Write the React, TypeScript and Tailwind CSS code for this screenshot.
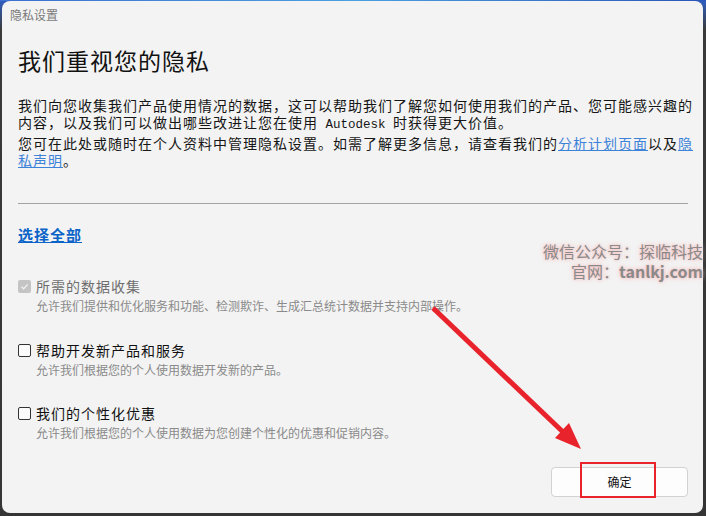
import React from "react";

const font = { fontFamily: '"Noto Sans CJK SC", "Noto Sans", sans-serif' };

function Box({ disabled }: { disabled?: boolean }) {
  if (disabled) {
    return (
      <div className="w-[13px] h-[13px] rounded-[2px] bg-[#c4c4c4] flex items-center justify-center shrink-0">
        <svg width="9" height="9" viewBox="0 0 9 9">
          <path d="M1.5 4.8 L3.6 6.8 L7.6 2.4" stroke="#f4f4f4" strokeWidth="1.2" fill="none" />
        </svg>
      </div>
    );
  }
  return <div className="w-[13px] h-[13px] rounded-[2px] border border-[#333] bg-[#fbfbfb] shrink-0" />;
}

function Item({ label, desc, disabled, mt }: { label: string; desc: string; disabled?: boolean; mt: string }) {
  return (
    <div className={mt}>
      <div className="flex items-center gap-[5px] h-[20px]">
        <Box disabled={disabled} />
        <span className={`text-[14px] tracking-[1px] leading-[20px] whitespace-nowrap ${disabled ? "text-[#6e6e6e]" : "text-[#111]"}`}>{label}</span>
      </div>
      <div className="mt-[2px] pl-[18px] text-[12px] leading-[16px] h-[16px] text-[#8a8a8a] whitespace-nowrap">{desc}</div>
    </div>
  );
}

const line = "h-[17px] text-[14px] tracking-[1px] leading-[17px] text-[#161616] whitespace-nowrap";

export default function App() {
  return (
    <div className="relative w-[706px] h-[516px] overflow-hidden bg-[linear-gradient(#2f5fc4_0px,#3a3a3a_30px,#353535_100%)]" style={font}>
      <div className="absolute left-0 right-0 top-0 h-[1px] bg-[linear-gradient(90deg,#3c6fd0,#4aa0e0,#2a55b8)]" />
      <div className="ml-[2px] mt-[1px] w-[701px] h-[512px] rounded-[8px] bg-[#f3f3f3] flex flex-col px-[16px] pr-[15px] pb-[16px]">
        <div className="h-[27px] flex items-center -ml-[8px] text-[12px] text-[#7a7a7a]">隐私设置</div>
        <div className="mt-[17px] h-[30px] text-[23px] leading-[30px] tracking-[1px] text-[#111]">我们重视您的隐私</div>
        <div className="mt-[22px]">
          <div className={line}>我们向您收集我们产品使用情况的数据，这可以帮助我们了解您如何使用我们的产品、您可能感兴趣的</div>
          <div className={line}>
            内容，以及我们可以做出哪些改进让您在使用
            <span className="text-[12.5px] tracking-normal whitespace-pre leading-[17px]" style={{ fontFamily: '"Liberation Mono", monospace' }}> Autodesk </span>
            时获得更大价值。
          </div>
        </div>
        <div className="mt-[4px]">
          <div className={line}>
            您可在此处或随时在个人资料中管理隐私设置。如需了解更多信息，请查看我们的
            <span className="text-[#3c82d8] underline">分析计划页面</span>以及<span className="text-[#3c82d8] underline">隐</span>
          </div>
          <div className={line}>
            <span className="text-[#3c82d8] underline">私声明</span>。
          </div>
        </div>
        <div className="mt-[34px] h-[1px] bg-[#a3a3a3] shrink-0" />
        <div className="mt-[20px] h-[20px] leading-[20px]">
          <span className="text-[15px] font-bold text-[#0a64c8] underline tracking-[1px]">选择全部</span>
        </div>
        <Item mt="mt-[32px]" disabled label="所需的数据收集" desc="允许我们提供和优化服务和功能、检测欺诈、生成汇总统计数据并支持内部操作。" />
        <Item mt="mt-[26px]" label="帮助开发新产品和服务" desc="允许我们根据您的个人使用数据开发新的产品。" />
        <Item mt="mt-[25px]" label="我们的个性化优惠" desc="允许我们根据您的个人使用数据为您创建个性化的优惠和促销内容。" />
        <div className="mt-auto flex justify-end">
          <button className="w-[137px] h-[30px] rounded-[4px] border border-[#d2d2d2] bg-[#fdfdfd] text-[12px] text-[#111]">确定</button>
        </div>
      </div>

      {/* watermark */}
      <div className="absolute right-[3px] top-[241px] text-right text-[16px] leading-[20px] text-[#8a8a8a] [text-shadow:0_0_3px_#f4b6b6,0_0_6px_#f7c9c9]">
        <div className="h-[20px]">微信公众号：探临科技</div>
        <div className="h-[20px] font-bold" style={{ fontFamily: '"Noto Sans CJK SC", "Liberation Sans", sans-serif' }}>
          <span className="font-normal">官网：</span>tanlkj.com
        </div>
      </div>

      {/* annotation arrow */}
      <svg className="absolute left-0 top-0 pointer-events-none" width="706" height="516">
        <line x1="433" y1="308" x2="563" y2="432" stroke="#e8232b" strokeWidth="5" />
        <polygon points="581,449 555,438 569,423" fill="#e8232b" />
      </svg>
      <div className="absolute left-[580px] top-[462px] w-[76px] h-[36px] border-2 border-[#e8232b]" />
    </div>
  );
}
